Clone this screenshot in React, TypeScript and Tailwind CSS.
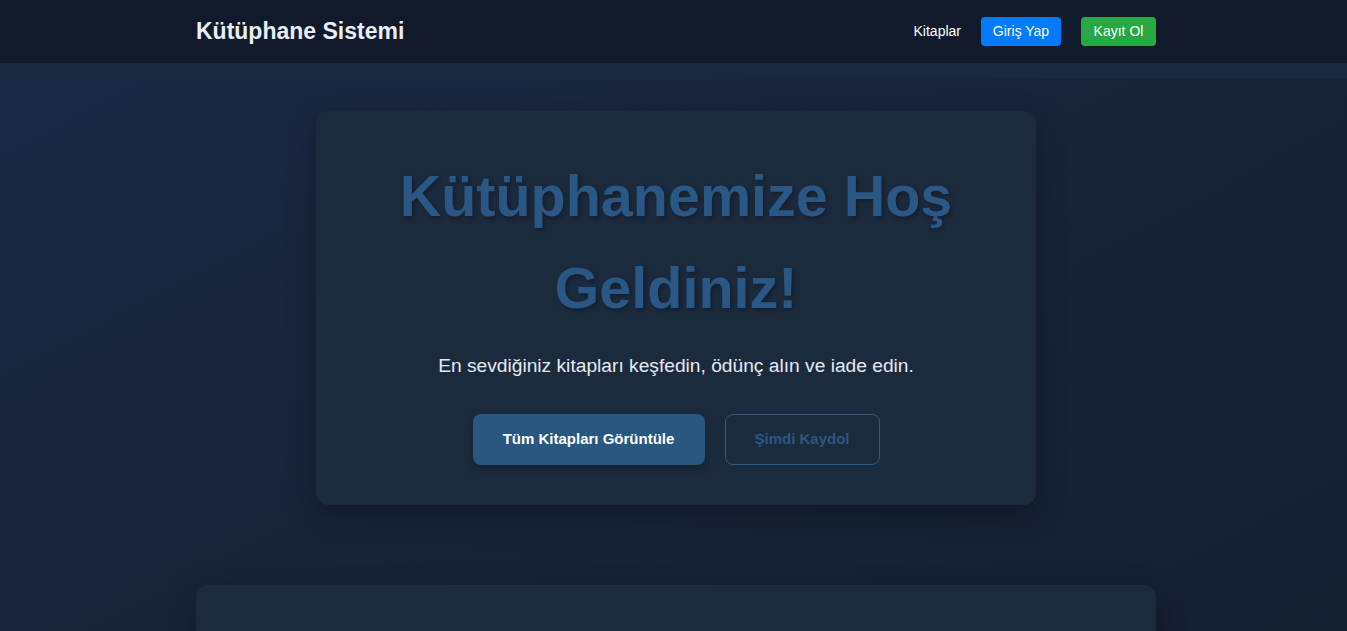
export default function App() {
  return (
    <div className="h-[631px] overflow-hidden bg-[#1a2840] pl-[5px] font-['Liberation_Sans',Arial,sans-serif]">
      <nav className="-ml-[5px] h-[63px] bg-[#111a2b] pl-[5px]">
        <div className="mx-auto flex h-full w-[960px] items-center justify-between">
          <span className="text-[23px] font-bold text-[#e8edf5]">Kütüphane Sistemi</span>
          <div className="flex items-center gap-5 text-[14px]">
            <a className="text-white">Kitaplar</a>
            <a className="flex h-[29px] w-[80px] items-center justify-center rounded bg-[#007bff] text-white">Giriş Yap</a>
            <a className="flex h-[29px] w-[75px] items-center justify-center rounded bg-[#28a745] text-white">Kayıt Ol</a>
          </div>
        </div>
      </nav>
      <main className="-ml-[5px] mt-4 min-h-[600px] bg-gradient-to-br from-[#1a2944] via-[#172338] to-[#141e2e] pl-[5px] pt-8">
        <section className="mx-auto flex w-[720px] flex-col items-center rounded-xl bg-[#1c2a3e] px-10 pt-[39px] pb-10 shadow-[0_10px_30px_rgba(0,0,0,0.3)]">
          <h1 className="w-[600px] text-center text-[57.5px] font-bold leading-[92px] text-[#2a5783] [text-shadow:2px_2px_4px_rgba(0,0,0,0.3)]">
            Kütüphanemize Hoş Geldiniz!
          </h1>
          <p className="mt-[18px] text-[19.2px] text-[#e5e9f0]">
            En sevdiğiniz kitapları keşfedin, ödünç alın ve iade edin.
          </p>
          <div className="mt-[33px] flex gap-5">
            <a className="flex h-[51px] w-[232px] items-center justify-center rounded-lg bg-[#2a5780] text-[15px] font-bold text-white shadow-[0_4px_10px_rgba(0,0,0,0.2)]">
              Tüm Kitapları Görüntüle
            </a>
            <a className="flex h-[51px] w-[155px] items-center justify-center rounded-lg border border-[#2b5d8c] text-[15px] font-bold text-[#2a5783]">
              Şimdi Kaydol
            </a>
          </div>
        </section>
        <section className="mx-auto mt-[80px] h-[200px] w-[960px] rounded-xl bg-[#1c2a3e] shadow-[0_10px_30px_rgba(0,0,0,0.3)]" />
      </main>
    </div>
  );
}
